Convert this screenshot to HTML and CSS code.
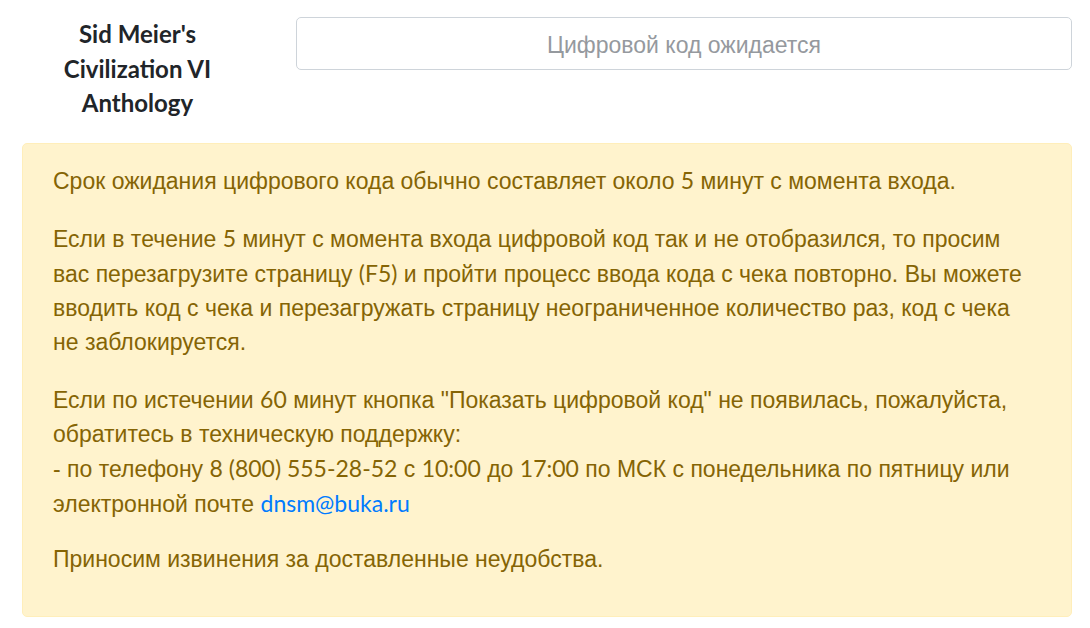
FILE: index.html
```html
<!DOCTYPE html>
<html lang="ru">
  <head>
    <meta charset="UTF-8" />
    <meta name="viewport" content="width=device-width, initial-scale=1.0" />
    <title>Цифровой код</title>
    <link rel="stylesheet" href="styles.css">
  </head>
  <body>
    <div class="page">
      <div class="top">
        <h1 class="game-title">Sid Meier's Civilization VI Anthology</h1>
        <input class="code-input" type="text" placeholder="Цифровой код ожидается" readonly>
      </div>
      <div class="alert">
        <p>Срок ожидания цифрового кода обычно составляет около <span class="lat">5</span> минут с момента входа.</p>
        <p>Если в течение <span class="lat">5</span> минут с момента входа цифровой код так и не отобразился, то просим вас перезагрузите страницу <span class="lat">(F5)</span> и пройти процесс ввода кода с чека повторно. Вы можете вводить код с чека и перезагружать страницу неограниченное количество раз, код с чека не заблокируется.</p>
        <p>Если по истечении <span class="lat">60</span> минут кнопка "Показать цифровой код" не появилась, пожалуйста, обратитесь в техническую поддержку:<br>
        - по телефону <span class="lat">8 (800) 555-28-52</span> с <span class="lat">10:00</span> до <span class="lat">17:00</span> по МСК с понедельника по пятницу или электронной почте <a class="lat" href="#">dnsm@buka.ru</a></p>
        <p class="last">Приносим извинения за доставленные неудобства.</p>
      </div>
    </div>
  </body>
</html>
```

FILE: styles.css
```css
* {
  margin: 0;
  padding: 0;
  box-sizing: border-box;
}
body {
  background-color: #fff;
  font-family: "Liberation Sans", Arial, sans-serif;
  color: #212529;
}
.page {
  padding: 17px 18px 0 22px;
}

.top {
  display: grid;
  grid-template-columns: 231px 1fr;
  column-gap: 43px;
  align-items: start;
}
.game-title {
  font-family: Lato, "Liberation Sans", sans-serif;
  font-size: 24px;
  font-weight: 700;
  line-height: 34.5px;
  text-align: center;
  color: #212529;
}
.code-input {
  width: 100%;
  height: 53px;
  padding-top: 3px;
  border: 1px solid #ced4da;
  border-radius: 5px;
  background-color: #fff;
  font-family: "Liberation Sans", Arial, sans-serif;
  font-size: 23px;
  text-align: center;
  outline: none;
}
.code-input::placeholder {
  color: #95999e;
}

/* блок с предупреждением */
.alert {
  margin-top: 22px;
  padding: 19px 30px 17px 30px;
  background-color: #fff3cd;
  border: 1px solid #ffeeba;
  border-radius: 5px;
  color: #856404;
  font-size: 23px;
  line-height: 34px;
}
.alert p {
  margin-bottom: 23px;
}
.alert p.last {
  margin-top: -2px;
}
.alert a {
  color: #007bff;
  text-decoration: none;
}
/* цифры и латиница набраны другим шрифтом */
.lat {
  font-family: Lato, "Liberation Sans", sans-serif;
}
```
